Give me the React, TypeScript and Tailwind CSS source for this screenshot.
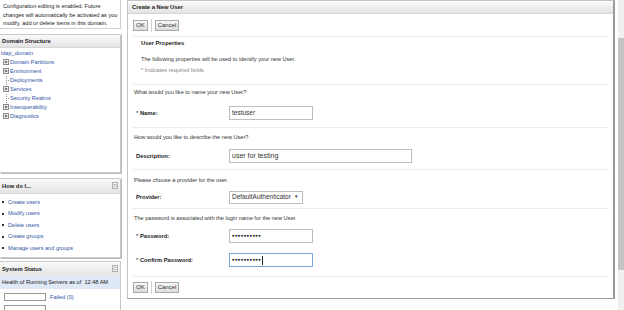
import React from "react";

const Plus = () => (
  <svg width="6" height="6" viewBox="0 0 6 6" className="shrink-0">
    <rect x="0.5" y="0.5" width="5" height="5" fill="#fff" stroke="#8a8a8a" strokeWidth="1" />
    <path d="M1.5 3h3M3 1.5v3" stroke="#333" strokeWidth="0.8" />
  </svg>
);

const Collapse = () => (
  <svg width="6" height="7" viewBox="0 0 6 7">
    <rect x="0.5" y="0.5" width="5" height="6" fill="#f4f4f4" stroke="#b0b0b0" />
    <path d="M1.5 2.5h3M1.5 4.5h3" stroke="#999" strokeWidth="0.7" />
  </svg>
);

const Btn = ({ children }: { children: React.ReactNode }) => (
  <div className="h-[11px] px-[2px] border border-[#a9a9a9] bg-gradient-to-b from-[#f8f8f8] to-[#dcdcdc] flex items-center text-[6px] text-[#333] leading-none">
    {children}
  </div>
);

const Buttons = () => (
  <div className="flex items-center gap-[3px] h-[14px]">
    <Btn>OK</Btn>
    <div className="w-px h-[13px] bg-[#cfcfcf]" />
    <Btn>Cancel</Btn>
  </div>
);

const Sep = () => <div className="h-px bg-[#ececec] mr-[4px]" />;

const Row = ({ label, req, children, h = 26 }: { label: string; req?: boolean; children: React.ReactNode; h?: number }) => (
  <div className="flex items-center" style={{ height: h }}>
    <div className="w-[95px] pl-[2px] font-bold text-[5.8px] text-[#222]">
      {req && <span className="font-normal">* </span>}
      {label}
    </div>
    {children}
  </div>
);

export default function App() {
  const link = "text-[#2f55a4]";
  return (
    <div className="w-[624px] h-[310px] overflow-hidden bg-white flex font-['Liberation_Sans',sans-serif] text-[5.6px] text-[#333] leading-[10px]">
      {/* Left column */}
      <div className="w-[121px] shrink-0 flex flex-col">
        <div className="h-[30px] pl-[3px] pt-[2px] border-b border-r border-[#cfcfcf] text-[#222] text-[5.6px] leading-[8.5px] whitespace-nowrap">
          Configuration editing is enabled. Future
          <br />
          changes will automatically be activated as you
          <br />
          modify, add or delete items in this domain.
        </div>
        <div className="mt-[5px] h-[139px] shrink-0 border border-[#c9c9c9] border-l-0 shadow-[1px_1px_0_#bbb]">
          <div className="h-[13px] bg-gradient-to-b from-[#fafafa] to-[#e4e4e4] border-b border-[#d8d8d8] flex items-center pl-[2px] font-bold text-[5.8px] text-[#222]">
            Domain Structure
          </div>
          <div className="pt-[1px] leading-[9px]">
            <div className={`${link} pl-[1px] h-[9px]`}>ldap_domain</div>
            {[
              ["Domain Partitions", true],
              ["Environment", true],
              ["Deployments", false],
              ["Services", true],
              ["Security Realms", false],
              ["Interoperability", true],
              ["Diagnostics", true],
            ].map(([t, p]) => (
              <div key={t as string} className="flex items-center h-[9px] pl-[3px]">
                {p ? (
                  <Plus />
                ) : (
                  <div className="w-[6px] h-[9px] relative shrink-0">
                    <div className="absolute left-[2.5px] top-0 h-[9px] border-l border-dotted border-[#999]" />
                    <div className="absolute left-[3px] top-[4px] w-[3px] border-t border-dotted border-[#999]" />
                  </div>
                )}
                <span className={`${link} pl-[1px]`}>{t as string}</span>
              </div>
            ))}
          </div>
        </div>
        <div className="mt-[5px] h-[80px] shrink-0 border border-[#c9c9c9] border-l-0 shadow-[1px_1px_0_#bbb]">
          <div className="h-[15px] bg-gradient-to-b from-[#fafafa] to-[#e4e4e4] border-b border-[#d8d8d8] flex items-center justify-between pl-[2px] pr-[2px] font-bold text-[5.8px] text-[#222]">
            How do I...
            <Collapse />
          </div>
          <div className="pt-[3px] leading-[11.5px]">
            {["Create users", "Modify users", "Delete users", "Create groups", "Manage users and groups"].map((t) => (
              <div key={t} className="flex items-center pl-[2px]">
                <span className="w-[2px] h-[2px] bg-[#333] mr-[4px]" />
                <span className={link}>{t}</span>
              </div>
            ))}
          </div>
        </div>
        <div className="mt-[3px] flex-1 border border-[#c9c9c9] border-l-0 border-b-0">
          <div className="h-[14px] bg-gradient-to-b from-[#fafafa] to-[#e4e4e4] flex items-center justify-between pl-[2px] pr-[2px] font-bold text-[5.8px] text-[#222]">
            System Status
            <Collapse />
          </div>
          <div className="h-[13px] bg-[#dfe8f5] flex items-center pl-[2px] text-[#222] whitespace-nowrap">
            Health of Running Servers as of&nbsp;&nbsp;12:48 AM
          </div>
          <div className="flex items-center pt-[3px] pl-[4px] gap-[4px]">
            <div className="w-[42px] h-[8px] border border-[#999] bg-white" />
            <span className={link}>Failed (0)</span>
          </div>
          <div className="ml-[4px] mt-[3px] w-[42px] h-[8px] border border-[#999]" />
        </div>
      </div>

      {/* Main panel */}
      <div className="ml-[6px] w-[488px] h-[299px] shrink-0 border border-[#c4c4c4] border-r-[#9a9a9a] border-b-[#9a9a9a] border-r-2 flex flex-col">
        <div className="h-[13px] shrink-0 bg-gradient-to-b from-[#fbfbfb] to-[#e3e3e3] border-b border-[#d6d6d6] flex items-center pl-[4px] font-bold text-[5.8px] text-[#222]">
          Create a New User
        </div>
        <div className="pl-[5px] flex flex-col">
          <div className="h-[22px] flex items-center">
            <Buttons />
          </div>
          <Sep />
          <div className="pl-[8px] h-[47px]">
            <div className="font-bold text-[5.8px] text-[#222] h-[12px] flex items-center">User Properties</div>
            <div className="h-[15px] flex items-center pt-[4px]">The following properties will be used to identify your new User.</div>
            <div className="h-[11px] flex items-center text-[#888]">* Indicates required fields</div>
          </div>
          <Sep />
          <div className="pl-[1px] h-[42px]">
            <div className="h-[14px] flex items-center">What would you like to name your new User?</div>
            <Row label="Name:" req h={28}>
              <div className="w-[84px] h-[14px] border border-[#bdbdbd] flex items-center pl-[2px] text-[6.5px] text-[#333]">testuser</div>
            </Row>
          </div>
          <Sep />
          <div className="pl-[1px] h-[41px]">
            <div className="h-[18px] flex items-center">How would you like to describe the new User?</div>
            <Row label="Description:" h={20}>
              <div className="w-[183px] h-[14px] border border-[#bdbdbd] flex items-center pl-[2px] text-[7px] text-[#333]">user for testing</div>
            </Row>
          </div>
          <Sep />
          <div className="pl-[1px] h-[38px]">
            <div className="h-[20px] flex items-center">Please choose a provider for the user.</div>
            <Row label="Provider:" h={14}>
              <div className="w-[74px] h-[13px] border border-[#bdbdbd] flex items-center pl-[2px] text-[6.5px] text-[#333] gap-[3px] whitespace-nowrap">
                DefaultAuthenticator <span className="text-[4.5px]">▼</span>
              </div>
            </Row>
          </div>
          <Sep />
          <div className="pl-[1px] h-[67px]">
            <div className="h-[18px] flex items-center">The password is associated with the login name for the new User.</div>
            <Row label="Password:" req h={18}>
              <div className="w-[84px] h-[14px] border border-[#bdbdbd] flex items-center pl-[2px] text-[4.5px] tracking-[0.2px] text-[#222]">●●●●●●●●●●</div>
            </Row>
            <Row label="Confirm Password:" req h={30}>
              <div className="w-[84px] h-[14px] border border-[#7fa5d6] flex items-center pl-[2px] text-[4.5px] tracking-[0.2px] text-[#222]">
                ●●●●●●●●●●<span className="w-px h-[9px] bg-[#222] ml-[1px]" />
              </div>
            </Row>
          </div>
          <Sep />
          <div className="h-[20px] flex items-center">
            <Buttons />
          </div>
        </div>
      </div>

      {/* Scrollbar */}
      <div className="ml-[3px] w-[7px] h-[310px] bg-[#f0f0f0] flex flex-col">
        <div className="h-[38px]" />
        <div className="h-[232px] bg-[#c4c4c4]" />
      </div>
    </div>
  );
}
